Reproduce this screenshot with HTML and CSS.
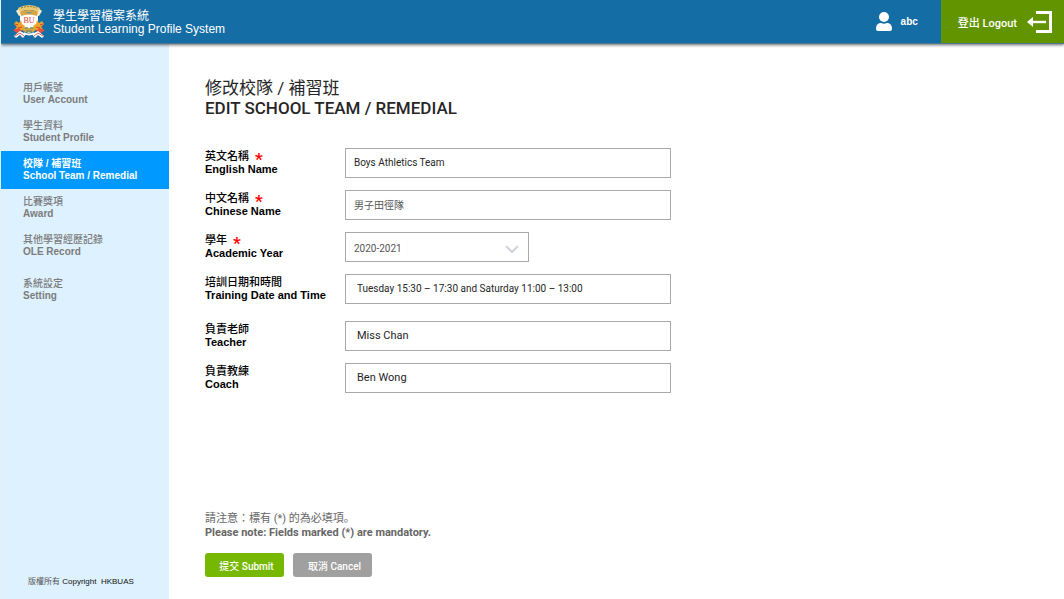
FILE: index.html
```html
<!DOCTYPE html>
<html lang="zh-Hant">
<head>
    <meta charset="UTF-8">
    <meta name="viewport" content="width=device-width, initial-scale=1.0">
    <title>Student Learning Profile System</title>
    <link rel="stylesheet" href="styles.css">
</head>
<body>
    <header class="header">
        <div class="brand">
            <svg class="crest" viewBox="0 0 32 34" aria-hidden="true">
                <path d="M3 6 L8 2 L9 10 L6 11 Z M29 6 L24 2 L23 10 L26 11 Z" fill="#f6ecd2"/>
                <path d="M5 3 Q16 -3 27 3 L25 7 Q16 3 7 7 Z" fill="#e8c873"/>
                <path d="M8 3 Q16 0 24 3" fill="none" stroke="#8f7a3a" stroke-width="1" stroke-dasharray="2 1"/>
                <path d="M7 8 Q16 4 25 8 V20 Q24 25 16 28 Q8 25 7 20 Z" fill="#fff"/>
                <path d="M7 7 Q16 3 25 7 L24 11 Q16 8 8 11 Z" fill="#dba544"/>
                <path d="M12 7 L20 7 L16 9 Z" fill="#7d9a8c"/>
                <text class="crest-text" x="16" y="18" text-anchor="middle">BU</text>
                <path d="M1 19 L3 16 L6 18 L8 15 L9 19 L12 21 L10 25 L5 26 L2 24 L4 22 Z" fill="#eda32b"/>
                <path d="M31 19 L29 16 L26 18 L24 15 L23 19 L20 21 L22 25 L27 26 L30 24 L28 22 Z" fill="#eda32b"/>
                <path d="M2 19 L5 20 M30 19 L27 20 M5 23 L9 22 M27 23 L23 22" stroke="#e0402c" stroke-width="1"/>
                <path d="M9 21 Q16 25 23 21 L22 26 Q16 29 10 26 Z" fill="#d8a931"/>
                <path d="M12 23 H15 M17 23 H20 M13 26 H19" stroke="#477a9c" stroke-width="1"/>
                <path d="M0 25 L6 23 L9 26 L4 28 Z M32 25 L26 23 L23 26 L28 28 Z" fill="#e8503c"/>
                <path d="M1 31 L7 26 L13 29 L10 33 L7 30 L3 33 Z" fill="#fff"/>
                <path d="M31 31 L25 26 L19 29 L22 33 L25 30 L29 33 Z" fill="#fff"/>
                <path d="M11 28 Q16 31 21 28" fill="none" stroke="#fff" stroke-width="2"/>
                <path d="M2 31 L7 28 L11 31 M30 31 L25 28 L21 31" fill="none" stroke="#e0604f" stroke-width="1"/>
            </svg>
            <div class="brand-name">
                <div>學生學習檔案系統</div>
                <div>Student Learning Profile System</div>
            </div>
        </div>
        <div class="user">
            <svg class="user-icon" viewBox="0 0 18 20" aria-hidden="true">
                <circle cx="9" cy="5" r="5" fill="#fff"/>
                <path d="M1 17 C1 13 3 11 6 11 Q9 12.500 12 11 C15 11 17 13 17 17 Q17 19 15 19 H3 Q1 19 1 17 Z" fill="#fff"/>
            </svg>
            <span>abc</span>
        </div>
        <a class="logout" href="#">
            <span>登出 Logout</span>
            <svg class="logout-icon" viewBox="0 0 26 22" aria-hidden="true">
                <path d="M9 1.500 H23.500 V20.500 H9" fill="none" stroke="#fff" stroke-width="3"/>
                <path d="M5 11 H19" stroke="#fff" stroke-width="2.400"/>
                <path d="M0 11 L6 6 V16 Z" fill="#fff"/>
            </svg>
        </a>
    </header>

    <div class="page">
        <aside class="sidebar">
            <nav class="menu">
                <a href="#"><span>用戶帳號</span><br>User Account</a>
                <a href="#"><span>學生資料</span><br>Student Profile</a>
                <a href="#" class="active">校隊 / 補習班<br>School Team / Remedial</a>
                <a href="#"><span>比賽獎項</span><br>Award</a>
                <a href="#"><span>其他學習經歷記錄</span><br>OLE Record</a>
                <a href="#" class="setting"><span>系統設定</span><br>Setting</a>
            </nav>
            <div class="copyright"><span>版權所有</span> Copyright &nbsp;HKBUAS</div>
        </aside>

        <main class="content">
            <h1><span>修改校隊 / 補習班</span><br>EDIT SCHOOL TEAM / REMEDIAL</h1>

            <form class="form">
                <div class="form-section">
                    <div class="form-group">
                        <label for="englishName"><span class="label-zh">英文名稱 <b class="required">*</b></span>English Name</label>
                        <input type="text" id="englishName" value="Boys Athletics Team">
                    </div>
                    <div class="form-group">
                        <label for="chineseName"><span class="label-zh">中文名稱 <b class="required">*</b></span>Chinese Name</label>
                        <input type="text" id="chineseName" class="muted" value="男子田徑隊">
                    </div>
                    <div class="form-group">
                        <label for="academicYear"><span class="label-zh">學年 <b class="required">*</b></span>Academic Year</label>
                        <div class="select-box">
                            <select id="academicYear" class="muted">
                                <option>2020-2021</option>
                            </select>
                            <svg class="arrow" viewBox="0 0 14 8" aria-hidden="true">
                                <path d="M1 1 L7 7 L13 1" fill="none" stroke="#cfd3dc" stroke-width="2"/>
                            </svg>
                        </div>
                    </div>
                    <div class="form-group">
                        <label for="training"><span class="label-zh">培訓日期和時間</span>Training Date and Time</label>
                        <input type="text" id="training" class="indent" value="Tuesday 15:30 – 17:30 and Saturday 11:00 – 13:00">
                    </div>
                </div>
                <div class="form-section">
                    <div class="form-group">
                        <label for="teacher"><span class="label-zh">負責老師</span>Teacher</label>
                        <input type="text" id="teacher" class="indent large" value="Miss Chan">
                    </div>
                    <div class="form-group">
                        <label for="coach"><span class="label-zh">負責教練</span>Coach</label>
                        <input type="text" id="coach" class="indent large" value="Ben Wong">
                    </div>
                </div>

                <div class="form-footer">
                    <p class="note"><span lang="ja">請注意：標有 (*) 的為必填項。</span><br>Please note: Fields marked (*) are mandatory.</p>
                    <div class="buttons">
                        <button type="submit" class="submit">提交 Submit</button>
                        <button type="button" class="cancel">取消 Cancel</button>
                    </div>
                </div>
            </form>
        </main>
    </div>
</body>
</html>
```
FILE: styles.css
```css
* {
    box-sizing: border-box;
}
body {
    display: flex;
    flex-direction: column;
    min-height: 100vh;
    margin: 0;
    border-left: 1px solid #e4eff5;
    font-family: "Liberation Sans", "Noto Sans CJK TC", sans-serif;
    background-color: #fff;
}
a {
    text-decoration: none;
}

/* Header */
.header {
    display: flex;
    position: relative;
    height: 44px;
    color: #fff;
    background-color: #156da5;
    border-bottom: 1px solid #4d7892;
    box-shadow: 0 1px 3px rgba(0, 0, 0, 0.6);
}
.brand {
    display: flex;
    flex: 1;
    align-items: center;
    gap: 8px;
    padding-left: 12px;
}
.crest {
    width: 32px;
    height: 34px;
}
.crest-text {
    font-family: "Liberation Serif", serif;
    font-size: 8px;
    fill: #e0382e;
}
.brand-name {
    font-size: 12px;
    line-height: 13px;
    padding-top: 2px;
}
.user {
    display: flex;
    align-items: center;
    gap: 8px;
    padding-right: 23px;
    font-size: 10px;
    font-weight: bold;
}
.user-icon {
    width: 18px;
    height: 20px;
}
.logout {
    display: flex;
    align-items: center;
    gap: 10px;
    padding: 0 11px 0 17px;
    color: #fff;
    background-color: #629400;
    font-family: Roboto, "Noto Sans CJK TC", sans-serif;
    font-size: 11px;
    font-weight: 500;
}
.logout-icon {
    width: 26px;
    height: 22px;
}

/* Sidebar */
.page {
    display: flex;
    flex: 1;
}
.sidebar {
    display: flex;
    flex-direction: column;
    justify-content: space-between;
    width: 168px;
    padding: 31px 0 11px;
    background-color: #def1ff;
}
.menu a {
    display: block;
    padding: 7px 0 7px 22px;
    color: #7c7c7c;
    font-size: 10px;
    font-weight: bold;
    line-height: 12px;
}
.menu span {
    font-weight: 500;
}
.menu .active {
    color: #fff;
    background-color: #0099ff;
}
.menu .setting {
    margin-top: 6px;
}
.copyright {
    padding-left: 27px;
    color: #111;
    font-size: 8px;
    line-height: 12px;
}
.copyright span {
    color: #555;
}

/* Content */
.content {
    display: flex;
    flex: 1;
    flex-direction: column;
    padding: 34px 36px 22px;
    font-family: Roboto, "Noto Sans CJK TC", sans-serif;
}
h1 {
    margin: 0 0 30px;
    color: #262626;
    font-size: 17px;
    font-weight: 500;
    line-height: 20px;
}
h1 span {
    font-weight: normal;
}
.form {
    display: flex;
    flex: 1;
    flex-direction: column;
    gap: 17px;
}
.form-section {
    display: flex;
    flex-direction: column;
    gap: 12px;
}
.form-group {
    display: flex;
    align-items: center;
}
.form-group label {
    width: 140px;
    color: #000;
    font-family: "Liberation Sans", "Noto Sans CJK TC", sans-serif;
    font-size: 11px;
    font-weight: bold;
    line-height: 13px;
}
.label-zh {
    display: flex;
    gap: 6px;
    font-weight: 500;
}
.required {
    height: 13px;
    color: #ff0000;
    font-family: Roboto, sans-serif;
    font-size: 17px;
    line-height: 18px;
}
input[type="text"], select {
    width: 100%;
    max-width: 326px;
    height: 30px;
    padding: 0 8px 2px;
    color: #262626;
    background-color: #fff;
    border: 1px solid #a9a9a9;
    border-radius: 0;
    font-family: Roboto, "Noto Sans CJK TC", sans-serif;
    font-size: 10px;
}
input[type="text"].indent {
    padding: 0 11px 2px;
}
input[type="text"].large {
    font-size: 11px;
}
input[type="text"].muted, select.muted {
    color: #555;
}
.select-box {
    position: relative;
    width: 184px;
}
.select-box select {
    display: block;
    padding: 2px 8px 0;
    appearance: none;
}
.arrow {
    position: absolute;
    top: 13px;
    right: 10px;
    width: 14px;
    height: 8px;
    pointer-events: none;
}

/* Note and buttons */
.form-footer {
    margin-top: auto;
}
.note {
    margin: 0 0 13px;
    color: #666;
    font-family: Roboto, "Noto Sans CJK JP", sans-serif;
    font-size: 11px;
    font-weight: bold;
    line-height: 14px;
}
.note span {
    font-weight: normal;
}
.buttons {
    display: flex;
    gap: 9px;
}
.buttons button {
    width: 79px;
    height: 24px;
    padding: 0 0 0 4px;
    color: #fff;
    border: none;
    border-radius: 3px;
    font-family: Roboto, "Noto Sans CJK TC", sans-serif;
    font-size: 10px;
    font-weight: 500;
    cursor: pointer;
}
.buttons .submit {
    background-color: #76b800;
}
.buttons .cancel {
    background-color: #a0a0a0;
}
```
